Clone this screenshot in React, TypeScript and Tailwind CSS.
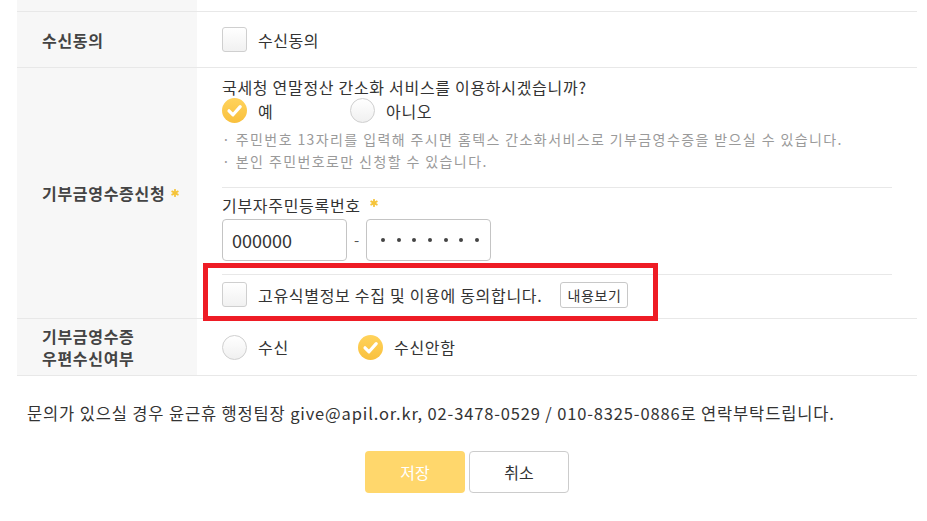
import React from "react";

const FONT = { fontFamily: '"Noto Sans CJK KR", "Noto Sans", sans-serif' };

function Star({ className = "" }: { className?: string }) {
  return (
    <svg width="8" height="8" viewBox="0 0 8 8" className={"shrink-0 " + className}>
      <g stroke="#f5c43a" strokeWidth="1.8" strokeLinecap="round">
        <line x1="4" y1="0.8" x2="4" y2="7.2" />
        <line x1="1.2" y1="2.4" x2="6.8" y2="5.6" />
        <line x1="1.2" y1="5.6" x2="6.8" y2="2.4" />
      </g>
    </svg>
  );
}

function Box() {
  return (
    <span className="inline-block w-[25px] h-[25px] rounded-[3px] border border-[#cfcfcf] bg-gradient-to-b from-white to-[#f1f1f1] shrink-0" />
  );
}

function Radio({ checked }: { checked?: boolean }) {
  if (checked) {
    return (
      <svg width="25" height="25" viewBox="0 0 25 25" className="shrink-0">
        <defs>
          <linearGradient id="yg" x1="0" y1="0" x2="0" y2="1">
            <stop offset="0" stopColor="#ffd35c" />
            <stop offset="1" stopColor="#f9c03d" />
          </linearGradient>
        </defs>
        <circle cx="12.5" cy="12.5" r="12.5" fill="url(#yg)" />
        <path d="M7 12.8 L11 16.8 L18.2 8.6" fill="none" stroke="#fff" strokeWidth="3.2" strokeLinecap="round" strokeLinejoin="round" />
      </svg>
    );
  }
  return (
    <span className="inline-block w-[25px] h-[25px] rounded-full border border-[#cfcfcf] bg-gradient-to-b from-white to-[#f0f0f0] shrink-0" />
  );
}

export default function App() {
  return (
    <div className="relative w-[927px] h-[521px] bg-white text-[#333] overflow-hidden" style={FONT}>
      <div className="ml-[17px] w-[900px]">
        {/* partial top row */}
        <div className="flex h-[12px] border-b border-[#e8e8e8]">
          <div className="w-[180px] bg-[#f7f7f7]" />
          <div className="flex-1" />
        </div>

        {/* Row 1 */}
        <div className="flex h-[56px] border-b border-[#e8e8e8]">
          <div className="w-[180px] bg-[#f7f7f7] pl-[25px] flex items-center text-[16px] tracking-[0.7px] font-bold text-[#444] leading-[22px]">
            수신동의
          </div>
          <div className="flex-1 pl-[25px] flex items-center gap-[11px] text-[16px] tracking-[0.5px] leading-[22px]">
            <Box />
            <span>수신동의</span>
          </div>
        </div>

        {/* Row 2 */}
        <div className="flex h-[251px] border-b border-[#e8e8e8]">
          <div className="w-[180px] bg-[#f7f7f7] pl-[25px] flex items-center text-[16px] tracking-[0.7px] font-bold text-[#444] leading-[22px]">
            <span>기부금영수증신청</span>
            <Star className="ml-[6px]" />
          </div>
          <div className="flex-1 pl-[25px] pr-[25px] flex flex-col">
            <div className="pt-[8px] h-[30px] text-[16px] tracking-[0.7px] leading-[22px]">
              국세청 연말정산 간소화 서비스를 이용하시겠습니까?
            </div>
            <div className="flex h-[25px] items-center text-[16px] tracking-[0.7px] leading-[22px]">
              <div className="w-[128px] flex items-center gap-[11px]">
                <Radio checked />
                <span>예</span>
              </div>
              <div className="flex items-center gap-[11px]">
                <Radio />
                <span>아니오</span>
              </div>
            </div>
            <div className="mt-[5px] text-[14px] leading-[22px] text-[#9a9a9a] tracking-[1.4px]">
              <div>· 주민번호 13자리를 입력해 주시면 홈텍스 간소화서비스로 기부금영수증을 받으실 수 있습니다.</div>
              <div>· 본인 주민번호로만 신청할 수 있습니다.</div>
            </div>
            <div className="mt-[15px] border-t border-[#e8e8e8] pt-[6px]">
              <div className="h-[22px] text-[16px] tracking-[0.7px] leading-[22px] flex items-center">
                <span>기부자주민등록번호</span>
                <Star className="ml-[9px] -mt-[4px]" />
              </div>
              <div className="mt-[3px] flex items-center h-[42px]">
                <div className="w-[125px] h-[42px] rounded-[4px] border border-[#c4c4c4] flex items-center pl-[9px] text-[18px] text-[#333]">
                  000000
                </div>
                <div className="w-[19px] text-center text-[#555] text-[15px]">-</div>
                <div className="w-[125px] h-[42px] rounded-[4px] border border-[#c4c4c4] flex items-center pl-[14px] gap-[11.7px]">
                  {[0, 1, 2, 3, 4, 5, 6].map((i) => (
                    <span key={i} className="w-[4px] h-[4px] rounded-full bg-[#444]" />
                  ))}
                </div>
              </div>
            </div>
            <div className="mt-[13px] border-t border-[#e8e8e8] h-[44px] pt-[6px]">
              <div className="flex items-center h-[27px] text-[16px] tracking-[0.7px] leading-[22px]">
                <Box />
                <span className="ml-[11px]">고유식별정보 수집 및 이용에 동의합니다.</span>
                <span className="ml-[18px] h-[26px] px-[6px] rounded-[3px] border border-[#c8c8c8] bg-white flex items-center text-[14px] tracking-[0.6px] text-[#333]">
                  내용보기
                </span>
              </div>
            </div>
          </div>
        </div>

        {/* Row 3 */}
        <div className="flex h-[57px] border-b border-[#e8e8e8]">
          <div className="w-[180px] bg-[#f7f7f7] pl-[25px] flex flex-col justify-center text-[16px] tracking-[0.7px] font-bold text-[#444] leading-[22px]">
            <div>기부금영수증</div>
            <div>우편수신여부</div>
          </div>
          <div className="flex-1 pl-[25px] flex items-center text-[16px] tracking-[0.7px] leading-[22px]">
            <div className="w-[136px] flex items-center gap-[11px]">
              <Radio />
              <span>수신</span>
            </div>
            <div className="flex items-center gap-[11px]">
              <Radio checked />
              <span>수신안함</span>
            </div>
          </div>
        </div>

        <div className="mt-[26px] pl-[10px] h-[22px] text-[16.5px] tracking-[0.85px] leading-[22px] text-[#333] whitespace-nowrap">
          문의가 있으실 경우 윤근휴 행정팀장 give@apil.or.kr, 02-3478-0529 / 010-8325-0886로 연락부탁드립니다.
        </div>

        <div className="mt-[27px] flex justify-center gap-[4px]">
          <div className="w-[100px] h-[42px] rounded-[4px] bg-[#ffd76c] text-white text-[16px] flex items-center justify-center">
            저장
          </div>
          <div className="w-[100px] h-[42px] rounded-[4px] border border-[#cccccc] bg-white text-[#333] text-[16px] flex items-center justify-center">
            취소
          </div>
        </div>
      </div>

      {/* red annotation box */}
      <div className="absolute left-[203px] top-[263px] w-[455px] h-[58px] border-[5px] border-[#ee1c25] pointer-events-none" />
    </div>
  );
}
